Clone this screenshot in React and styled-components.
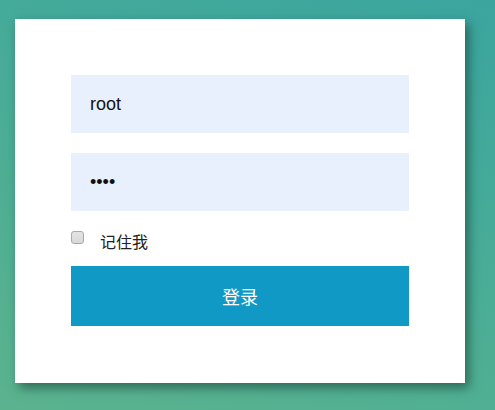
import React from "react";
import styled, { createGlobalStyle } from "styled-components";

const Global = createGlobalStyle`
  html, body { margin: 0; padding: 0; }
  body {
    width: 495px;
    height: 410px;
    overflow: hidden;
    background: linear-gradient(200deg, #3ba59f 0%, #4aad96 50%, #5bb38e 100%);
    font-family: "Liberation Sans", Arial, "Noto Sans CJK SC", sans-serif;
  }
`;

const Page = styled.div`
  padding: 19px 0 0 15px;
`;

const Card = styled.form`
  box-sizing: border-box;
  width: 450px;
  height: 364px;
  background: #fff;
  padding: 56px 56px 0 56px;
  box-shadow: 4px 5px 10px rgba(20, 60, 50, 0.6);
  display: flex;
  flex-direction: column;
`;

const Field = styled.input`
  box-sizing: border-box;
  width: 338px;
  height: 58px;
  border: none;
  outline: none;
  background: #e8f0fe;
  padding: 0 19px;
  margin-bottom: ${(p) => p.$mb}px;
  font-family: "Liberation Sans", Arial, sans-serif;
  font-size: 18px;
  color: #111;
`;

const RememberRow = styled.label`
  display: flex;
  align-items: center;
  height: 20px;
  margin-bottom: 15px;
  font-family: "Noto Sans CJK SC", "Liberation Sans", sans-serif;
  font-size: 16px;
  color: #222;
`;

const Check = styled.input`
  appearance: none;
  -webkit-appearance: none;
  box-sizing: border-box;
  width: 13px;
  height: 13px;
  margin: 0 16px 7px 0;
  border: 1px solid #a9a9a9;
  border-radius: 3px;
  background: linear-gradient(#e4e4e4, #d8d8d8);
  &:checked {
    background: #1199c6;
    border-color: #0d7fa5;
  }
`;

const Submit = styled.button`
  width: 338px;
  height: 60px;
  border: none;
  background: #1199c6;
  color: #fff;
  font-family: "Noto Sans CJK SC", sans-serif;
  font-size: 18px;
  cursor: pointer;
`;

export default function App() {
  return (
    <>
      <Global />
      <Page>
        <Card onSubmit={(e) => e.preventDefault()}>
          <Field type="text" defaultValue="root" $mb={20} />
          <Field type="password" defaultValue="root" $mb={20} />
          <RememberRow>
            <Check type="checkbox" />
            记住我
          </RememberRow>
          <Submit type="submit">登录</Submit>
        </Card>
      </Page>
    </>
  );
}
